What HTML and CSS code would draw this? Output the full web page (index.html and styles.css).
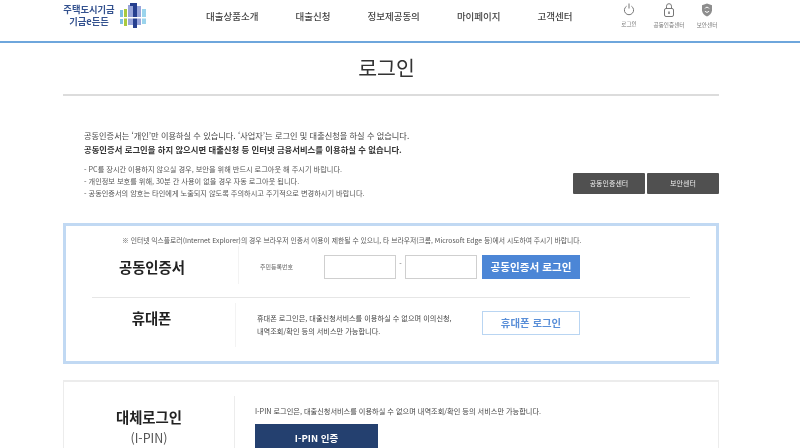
FILE: index.html
```html
<!DOCTYPE html>
<html lang="ko">
<head>
<meta charset="utf-8">
<title>로그인</title>
<link rel="stylesheet" href="styles.css">
</head>
<body>
<header class="header">
  <div class="logo">
    <div class="logo-text"><span>주택도시기금</span><span>기금e든든</span></div>
    <svg class="logo-mark" width="28" height="26" viewBox="0 0 28 26">
      <rect x="1" y="8" width="3" height="8" fill="#7fc0e2"/>
      <rect x="1" y="17" width="3" height="5" fill="#7fc0e2"/>
      <rect x="5" y="7" width="3" height="17" fill="#a9c93f"/>
      <rect x="9" y="3" width="5" height="20" fill="#98a5da"/>
      <rect x="14" y="1" width="4" height="25" fill="#263f8f"/>
      <rect x="11" y="1" width="7" height="3" fill="#263f8f"/>
      <rect x="18" y="4" width="4" height="19" fill="#98a5da"/>
      <rect x="23" y="7" width="4" height="15" fill="#9bd4ec"/>
      <rect x="1" y="15" width="26" height="1.5" fill="#ffffff"/>
    </svg>
  </div>
  <nav class="nav">
    <a>대출상품소개</a><a>대출신청</a><a>정보제공동의</a><a>마이페이지</a><a>고객센터</a>
  </nav>
  <div class="utils">
    <div class="util util-login">
      <svg width="12" height="13" viewBox="0 0 12 13" fill="none" stroke="#777" stroke-width="1"><path d="M3.600 3.200a4.600 4.600 0 1 0 4.800 0"/><path d="M6 .5v5"/></svg>
      <span>로그인</span>
    </div>
    <div class="util util-cert">
      <svg width="12" height="14" viewBox="0 0 12 14" fill="none" stroke="#777" stroke-width="1"><rect x="1.500" y="5.500" width="9" height="8" rx="1.500"/><path d="M3.500 5.500V3.200a2.500 2.500 0 0 1 5 0v2.300"/><path d="M6 8.500v2.500" stroke-width="1.500"/></svg>
      <span>공동인증센터</span>
    </div>
    <div class="util util-sec">
      <svg width="12" height="14" viewBox="0 0 12 14"><path d="M6 .5 11 2.300v5c0 3-2.400 5-5 6.200-2.600-1.200-5-3.200-5-6.200v-5z" fill="#8d8d8d"/><path d="M4 5.500a2.200 2.200 0 0 1 4 0M8 8a2.200 2.200 0 0 1-4 0" fill="none" stroke="#fff" stroke-width="1"/></svg>
      <span>보안센터</span>
    </div>
  </div>
</header>

<main class="page">
  <h1 class="title">로그인</h1>

  <section class="intro">
    <div class="intro-top">
      <p class="lead">공동인증서는 ‘개인’만 이용하실 수 있습니다. ‘사업자’는 로그인 및 대출신청을 하실 수 없습니다.</p>
      <p class="lead strong">공동인증서 로그인을 하지 않으시면 대출신청 등 인터넷 금융서비스를 이용하실 수 없습니다.</p>
    </div>
    <div class="intro-bottom">
      <ul class="notes">
        <li>- PC를 장시간 이용하지 않으실 경우, 보안을 위해 반드시 로그아웃 해 주시기 바랍니다.</li>
        <li>- 개인정보 보호를 위해, 30분 간 사용이 없을 경우 자동 로그아웃 됩니다.</li>
        <li>- 공동인증서의 암호는 타인에게 노출되지 않도록 주의하시고 주기적으로 변경하시기 바랍니다.</li>
      </ul>
      <div class="dark-btns">
        <a class="dark-btn">공동인증센터</a>
        <a class="dark-btn">보안센터</a>
      </div>
    </div>
  </section>

  <section class="login-box">
    <p class="warn">※ 인터넷 익스플로러(Internet Explorer)의 경우 브라우저 인증서 이용이 제한될 수 있으니, 타 브라우저(크롬, Microsoft Edge 등)에서 시도하여 주시기 바랍니다.</p>
    <div class="row row-cert">
      <h2 class="row-title">공동인증서</h2>
      <div class="row-body">
        <label class="field-label">주민등록번호</label>
        <div class="field-group">
          <span class="input"></span><span class="dash">-</span><span class="input"></span>
        </div>
        <a class="btn btn-primary">공동인증서 로그인</a>
      </div>
    </div>
    <div class="row row-phone">
      <h2 class="row-title">휴대폰</h2>
      <div class="row-body">
        <p class="desc">휴대폰 로그인은, 대출신청서비스를 이용하실 수 없으며 이의신청,<br>내역조회/확인 등의 서비스만 가능합니다.</p>
        <a class="btn btn-outline">휴대폰 로그인</a>
      </div>
    </div>
  </section>

  <section class="alt-box">
    <div class="alt-head">
      <h2 class="row-title">대체로그인</h2>
      <span class="alt-sub">(I-PIN)</span>
    </div>
    <div class="alt-body">
      <p class="desc">I-PIN 로그인은, 대출신청서비스를 이용하실 수 없으며 내역조회/확인 등의 서비스만 가능합니다.</p>
      <a class="btn btn-navy">I-PIN 인증</a>
    </div>
  </section>
</main>
</body>
</html>
```
FILE: styles.css
```css
* { box-sizing: border-box; margin: 0; padding: 0; }
html, body { height: 448px; overflow: hidden; }
body {
  background: #fff;
  color: #333;
  font-family: "Noto Sans CJK KR", "Noto Sans", sans-serif;
  filter: blur(0.45px);
}
h1, h2 { font-weight: 400; }
ul { list-style: none; }

.header {
  height: 43px;
  border-bottom: 2px solid #6ea6dc;
  display: flex;
  align-items: flex-start;
  padding-left: 63px;
}
.logo { width: 143px; display: flex; gap: 2px; padding-top: 2px; }
.logo-text {
  width: 52px;
  display: flex;
  flex-direction: column;
  align-items: center;
  font-size: 9.3px;
  line-height: 12px;
  font-weight: 700;
  color: #34528f;
  white-space: nowrap;
  padding-top: 1px;
}
.logo-mark { margin-left: 2px; }
.nav {
  width: 381px;
  display: flex;
  gap: 37px;
  padding-top: 9px;
  font-size: 9.5px;
  line-height: 15px;
  font-weight: 500;
  color: #444;
  white-space: nowrap;
}
.utils { display: flex; padding-top: 3px; }
.util {
  display: flex;
  flex-direction: column;
  align-items: center;
  gap: 4px;
  font-size: 5.6px;
  line-height: 8px;
  color: #777;
  white-space: nowrap;
}
.util-login { width: 26px; margin-left: 29px; }
.util-cert { width: 36px; margin-left: 9px; }
.util-sec { width: 24px; margin-left: 8px; }

.page { width: 656px; margin-left: 63px; }
.title {
  height: 53px;
  border-bottom: 2px solid #dcdcdc;
  text-align: center;
  font-size: 20.5px;
  line-height: 46px;
  color: #333;
  padding: 1px 9px 0 0;
}
.intro { padding: 32px 0 0 21px; height: 127px; }
.lead { font-size: 8.2px; line-height: 14px; color: #444; white-space: nowrap; }
.lead.strong { font-size: 8.35px; font-weight: 700; color: #333; }
.intro-top { height: 29px; }
.intro-bottom { display: flex; justify-content: space-between; align-items: flex-start; padding-top: 6px; }
.notes { font-size: 7.2px; line-height: 12px; color: #555; white-space: nowrap; }
.dark-btns { display: flex; gap: 2px; margin-top: 10px; }
.dark-btn {
  width: 72px;
  height: 21px;
  background: #505050;
  border-radius: 1px;
  color: #eee;
  font-size: 7px;
  line-height: 21px;
  text-align: center;
}

.login-box {
  height: 141px;
  border: 3px solid #c1d9f3;
  padding: 9px 26px 0;
}
.warn {
  font-size: 6.8px;
  line-height: 11px;
  color: #555;
  white-space: nowrap;
  margin: 0 -26px;
  padding-left: 56px;
}
.row { display: flex; }
.row-title {
  font-size: 14.4px;
  font-weight: 700;
  color: #222;
  text-align: center;
}
.row-cert {
  height: 52px;
  border-bottom: 1px solid #e6e6e6;
  padding-top: 3px;
}
.row-cert .row-title { width: 146px; padding-right: 26px; line-height: 36px; }
.row-cert .row-body { height: 38px; padding-top: 9px; padding-left: 21px; margin-top: -3px; border-left: 1px solid #f3f3f3; display: flex; align-items: flex-start; }
.field-label { width: 64px; font-size: 6px; line-height: 24px; color: #666; }
.field-group { display: flex; align-items: flex-start; }
.input { width: 72px; height: 24px; border: 1px solid #cfcfcf; background: #fff; }
.dash { width: 9px; text-align: center; font-size: 7px; line-height: 16px; color: #666; }
.btn { display: block; text-align: center; }
.btn-primary {
  width: 98px;
  height: 24px;
  margin-left: 5px;
  background: #4c86d6;
  color: #fff;
  font-size: 10.6px;
  font-weight: 700;
  line-height: 24px;
}
.row-phone { padding-top: 5px; }
.row-phone .row-title { width: 143px; padding-right: 24px; line-height: 30px; }
.row-phone .row-body {
  height: 44px;
  padding: 8px 0 0 21px;
  border-left: 1px solid #f3f3f3;
  display: flex;
  align-items: flex-start;
}
.desc { font-size: 7.2px; line-height: 13px; color: #444; white-space: nowrap; }
.row-phone .desc { width: 225px; margin-top: 1px; }
.btn-outline {
  width: 98px;
  height: 24px;
  border: 1px solid #b9d5f2;
  color: #5a8fd8;
  font-size: 10.4px;
  font-weight: 700;
  line-height: 22px;
}

.alt-box {
  margin-top: 16px;
  height: 120px;
  border: 1px solid #ececec;
  border-width: 2px 1px;
  padding-top: 14px;
  display: flex;
  align-items: flex-start;
}
.alt-head {
  width: 171px;
  height: 64px;
  border-right: 1px solid #ececec;
  display: flex;
  flex-direction: column;
  align-items: center;
  padding-top: 10px;
}
.alt-head .row-title { line-height: 22px; }
.alt-sub { font-size: 12.5px; line-height: 20px; color: #555; }
.alt-body { padding: 9px 0 0 20px; }
.btn-navy {
  width: 123px;
  height: 34px;
  margin-top: 6px;
  background: #24406f;
  color: #fff;
  font-size: 9.5px;
  font-weight: 700;
  line-height: 29px;
}
```
